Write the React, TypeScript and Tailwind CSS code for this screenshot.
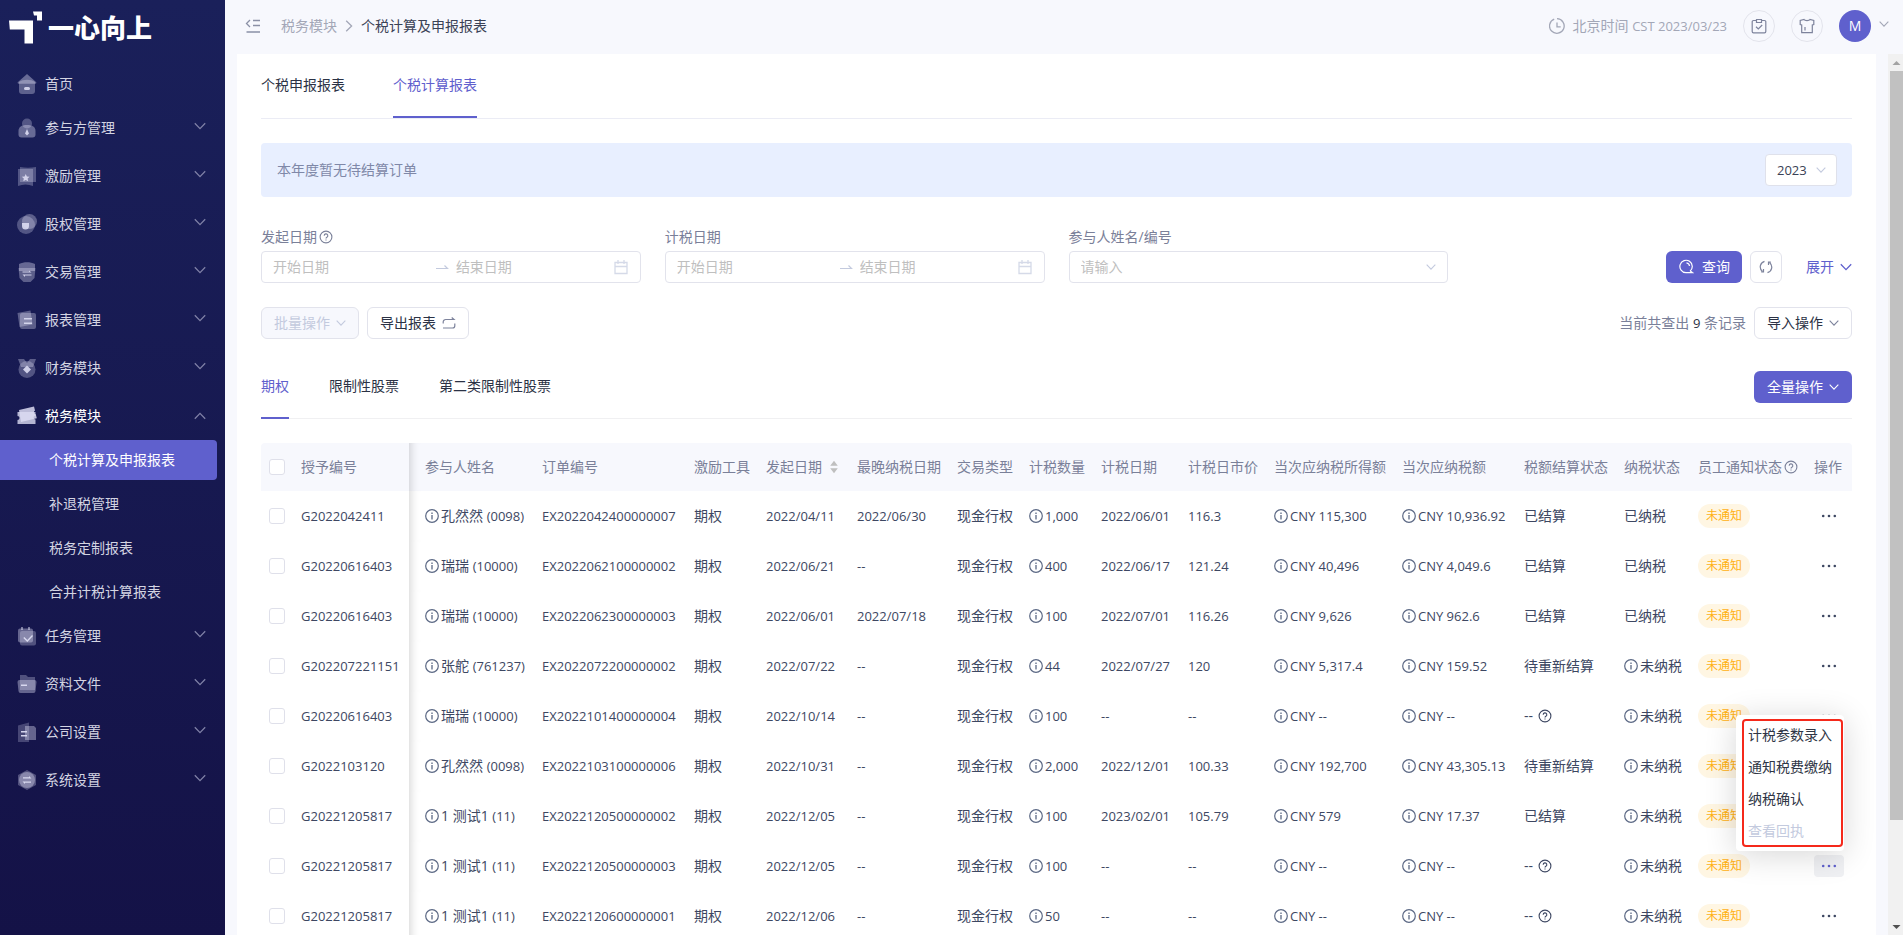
import React, { useState } from "react";

type IconProps = { className?: string };

type Row = {
  grant: string;
  name: string;
  code: string;
  order: string;
  start: string;
  deadline: string;
  qty: string;
  taxDate: string;
  price: string;
  income: string;
  tax: string;
  settle: string;
  paid: boolean;
};

const ROWS: Row[] = [
  { grant: "G2022042411", name: "孔然然", code: "(0098)", order: "EX2022042400000007", start: "2022/04/11", deadline: "2022/06/30", qty: "1,000", taxDate: "2022/06/01", price: "116.3", income: "CNY 115,300", tax: "CNY 10,936.92", settle: "已结算", paid: true },
  { grant: "G20220616403", name: "瑞瑞", code: "(10000)", order: "EX2022062100000002", start: "2022/06/21", deadline: "--", qty: "400", taxDate: "2022/06/17", price: "121.24", income: "CNY 40,496", tax: "CNY 4,049.6", settle: "已结算", paid: true },
  { grant: "G20220616403", name: "瑞瑞", code: "(10000)", order: "EX2022062300000003", start: "2022/06/01", deadline: "2022/07/18", qty: "100", taxDate: "2022/07/01", price: "116.26", income: "CNY 9,626", tax: "CNY 962.6", settle: "已结算", paid: true },
  { grant: "G202207221151", name: "张舵", code: "(761237)", order: "EX2022072200000002", start: "2022/07/22", deadline: "--", qty: "44", taxDate: "2022/07/27", price: "120", income: "CNY 5,317.4", tax: "CNY 159.52", settle: "待重新结算", paid: false },
  { grant: "G20220616403", name: "瑞瑞", code: "(10000)", order: "EX2022101400000004", start: "2022/10/14", deadline: "--", qty: "100", taxDate: "--", price: "--", income: "CNY --", tax: "CNY --", settle: "", paid: false },
  { grant: "G2022103120", name: "孔然然", code: "(0098)", order: "EX2022103100000006", start: "2022/10/31", deadline: "--", qty: "2,000", taxDate: "2022/12/01", price: "100.33", income: "CNY 192,700", tax: "CNY 43,305.13", settle: "待重新结算", paid: false },
  { grant: "G20221205817", name: "1 测试1", code: "(11)", order: "EX2022120500000002", start: "2022/12/05", deadline: "--", qty: "100", taxDate: "2023/02/01", price: "105.79", income: "CNY 579", tax: "CNY 17.37", settle: "已结算", paid: false },
  { grant: "G20221205817", name: "1 测试1", code: "(11)", order: "EX2022120500000003", start: "2022/12/05", deadline: "--", qty: "100", taxDate: "--", price: "--", income: "CNY --", tax: "CNY --", settle: "", paid: false },
  { grant: "G20221205817", name: "1 测试1", code: "(11)", order: "EX2022120600000001", start: "2022/12/06", deadline: "--", qty: "50", taxDate: "--", price: "--", income: "CNY --", tax: "CNY --", settle: "", paid: false },
];

const TAX_PAGES = ["个税计算及申报报表", "补退税管理", "税务定制报表", "合并计税计算报表"];
const STOCK_TABS = ["期权", "限制性股票", "第二类限制性股票"];
const MENU_ITEMS = ["计税参数录入", "通知税费缴纳", "纳税确认", "查看回执"];

// --------------------------------------------------------------------------
// Icons
// --------------------------------------------------------------------------
const Chevron: React.FC<IconProps> = ({ className }) => (
  <svg viewBox="0 0 12 12" fill="none" stroke="currentColor" className={className}>
    <path d="M0.8 3.2 6 8.6l5.2-5.4" strokeWidth="1.3" />
  </svg>
);

const InfoIcon: React.FC = () => (
  <svg viewBox="0 0 14 14" fill="none" stroke="currentColor" className="size-[14px] shrink-0 text-[#5b6884]">
    <circle cx="7" cy="7" r="6.3" strokeWidth="1.2" />
    <path d="M7 6v4.4M7 3.6v1.3" strokeWidth="1.3" />
  </svg>
);

const HelpIcon: React.FC = () => (
  <svg viewBox="0 0 14 14" fill="none" stroke="currentColor" className="size-[14px] shrink-0">
    <circle cx="7" cy="7" r="5.9" strokeWidth="1.1" />
    <path d="M5.2 5.7a1.8 1.8 0 1 1 2.7 1.5c-.6.4-.9.7-.9 1.3M7 9.4v1.2" strokeWidth="1.1" />
  </svg>
);

const CalendarIcon: React.FC = () => (
  <svg viewBox="0 0 16 16" fill="none" stroke="#d5dae8" className="size-4 shrink-0">
    <path d="M2 3.500h12v11H2zM2 7.500h12M5 1v4M11 1v4" strokeWidth="1.3" />
  </svg>
);

const MENU_ICONS: Record<string, React.ReactNode> = {
  首页: (
    <>
      <path d="M10 0 19 8a1 1 0 0 1-.6 1.8H1.6A1 1 0 0 1 1 8Z" opacity=".4" />
      <path d="M2 8c4-3 12-3 16 0v9a3 3 0 0 1-3 3H5a3 3 0 0 1-3-3Z" opacity=".35" />
      <rect x="7" y="13" width="6" height="3" rx="1.5" opacity=".9" />
    </>
  ),
  参与方管理: (
    <>
      <circle cx="10" cy="5.5" r="5" opacity=".3" />
      <path d="M1.5 13c0-4 3-6 8.5-6s8.5 2 8.5 6v3.5a3 3 0 0 1-3 3h-11a3 3 0 0 1-3-3Z" opacity=".4" />
      <path d="m10 11 2 4.5-2 2-2-2Z" opacity=".9" />
    </>
  ),
  激励管理: (
    <>
      <path d="M3 1c5 1 11 1 16 0v15H3Z" opacity=".3" />
      <path d="M1 3h15v17c-5-2-10-2-15 0Z" opacity=".3" />
      <path d="m8.7 8 1.2 2.5 2.7.3-2 1.800.6 2.700-2.500-1.300-2.400 1.300.5-2.700-2-1.800 2.800-.3Z" opacity=".9" />
    </>
  ),
  股权管理: (
    <>
      <circle cx="12.5" cy="7.5" r="7.5" opacity=".35" />
      <circle cx="9" cy="11" r="9" opacity=".3" />
      <path d="M5 9h7v3a3.5 3.5 0 0 1-7 0Z" opacity=".9" />
    </>
  ),
  交易管理: (
    <>
      <path d="M2 2c5-2.500 11-2.500 16 0v7H2Z" opacity=".4" />
      <path d="M1.500 6h17l-1 10-4 4h-7l-4-4Z" opacity=".35" />
      <path d="M5.500 10.500h9L12 8.500v1H5.500zM14.500 12.500h-9L8 15v-1.500h6.500z" opacity=".9" />
    </>
  ),
  报表管理: (
    <>
      <path d="m.5 3 13-2.500 2 14L2.500 17Z" opacity=".35" />
      <rect x="3" y="3" width="16" height="16" rx="2" opacity=".35" />
      <path d="M7 8h8v1.500H7zM7 12.500h8V14H7z" opacity=".9" />
    </>
  ),
  财务模块: (
    <>
      <path d="M1 1h6l3 4 3-4h6l-3 8H4Z" opacity=".35" />
      <circle cx="10" cy="11.5" r="8.5" opacity=".3" />
      <path d="m10 7.500 4 4-4 4-4-4Z" opacity=".9" />
    </>
  ),
  税务模块: (
    <>
      <path d="m2 4 15-3.500 1 4a2 2 0 0 0 .8 3.800l1 4L4 16Z" opacity=".85" />
      <path d="M.500 6h18v3.500a2 2 0 0 0 0 4V18H.500v-4a2 2 0 0 0 0-4Z" opacity=".8" />
    </>
  ),
  任务管理: (
    <>
      <rect x="1" y="2.5" width="15" height="14" rx="2" opacity=".4" />
      <path d="M4 1h2v3H4zM11 1h2v3h-2z" opacity=".5" />
      <rect x="3" y="5" width="16" height="14.5" rx="2" opacity=".3" />
      <path d="m7.300 11 3 3 4.700-5 1 1-5.700 6-4-4Z" opacity=".95" />
    </>
  ),
  资料文件: (
    <>
      <path d="M3 1h6l2 2h7v13H3Z" opacity=".3" />
      <path d="M.5 8a2 2 0 0 1 2-2h15a2 2 0 0 1 2 2l-1 9a2 2 0 0 1-2 2h-13a2 2 0 0 1-2-2Z" opacity=".4" />
      <path d="M4 10.500h6V12H4z" opacity=".95" />
    </>
  ),
  公司设置: (
    <>
      <path d="M8 4h9l2 2v12H8Z" opacity=".4" />
      <path d="M1 3.500 12 .5V20H1Z" opacity=".25" />
      <path d="M4 9h6v1.500H4zM4 13h6v1.500H4z" opacity=".95" />
    </>
  ),
  系统设置: (
    <>
      <path d="m10 0 9 5v10l-9 5-9-5V5Z" opacity=".3" />
      <circle cx="10" cy="10" r="8" opacity=".4" />
      <path d="M6 7.300h6V6l2.500 2.500H6zM14 12.700H8V14l-2.500-2.500H14z" opacity=".95" />
    </>
  ),
};

// --------------------------------------------------------------------------
// Sidebar
// --------------------------------------------------------------------------
const MenuItem: React.FC<{ label: string; open?: boolean; leaf?: boolean }> = ({ label, open, leaf }) => (
  <button
    aria-expanded={leaf ? undefined : !!open}
    className={`flex h-10 w-full items-center pl-[17px] pr-[19px] text-left ${open ? "text-white" : "text-[#d3d4e2]"}`}
  >
    <svg viewBox="0 0 20 20" fill="#dcdcf2" className="mr-2 size-5 shrink-0">
      {MENU_ICONS[label]}
    </svg>
    <span className="flex-1">{label}</span>
    {!leaf && <Chevron className={`size-3 text-[#7f80a6] ${open ? "rotate-180" : "mb-1"}`} />}
  </button>
);

const Sidebar: React.FC = () => (
  <aside className="w-[225px] shrink-0 bg-gradient-to-b from-[#1a205a] to-[#141247]">
    <div className="flex h-14 items-center pl-2 text-white">
      <svg viewBox="0 0 36 36" fill="white" className="size-9">
        <path d="M1 10.500h24V33.500H16.500V19.500H1.800Z M25 1.500h9V10.500h-5V5.500h-3Z" />
      </svg>
      <span className="ml-1 text-[26px] font-black leading-9">一心向上</span>
    </div>
    <nav className="mt-2">
      <div className="mb-1">
        <MenuItem label="首页" leaf />
      </div>
      <div className="mb-2 flex flex-col gap-2">
        <MenuItem label="参与方管理" />
        <MenuItem label="激励管理" />
        <MenuItem label="股权管理" />
        <MenuItem label="交易管理" />
        <MenuItem label="报表管理" />
        <MenuItem label="财务模块" />
      </div>
      <MenuItem label="税务模块" open />
      <div className="my-1 flex flex-col gap-1 pr-2">
        {TAX_PAGES.map((page, i) => (
          <a
            key={page}
            href="#"
            className={`flex h-10 items-center pl-[49px] ${
              i === 0 ? "rounded-r bg-[#5f60cd] text-white" : "text-[#d3d4e2]"
            }`}
          >
            {page}
          </a>
        ))}
      </div>
      <div className="flex flex-col gap-2">
        <MenuItem label="任务管理" />
        <MenuItem label="资料文件" />
        <MenuItem label="公司设置" />
        <MenuItem label="系统设置" />
      </div>
    </nav>
  </aside>
);

// --------------------------------------------------------------------------
// Top bar
// --------------------------------------------------------------------------
const TopBar: React.FC = () => (
  <header className="flex h-[54px] shrink-0 items-center pb-[2px] pl-5 pr-[14px]">
    <button aria-label="收起菜单" className="mr-5">
      <svg viewBox="0 0 16 16" fill="none" stroke="#8b90a6" strokeWidth="1.300" className="size-4">
        <path d="M5 2 1.500 5.500 5 9M8 2.500h7M8 7.500h7M1.500 14h13.500" />
      </svg>
    </button>
    <nav className="flex items-center">
      <a href="#" className="text-[#a3a7b7]">税务模块</a>
      <Chevron className="mx-[6px] size-3 -rotate-90 text-[#a3a7b7]" />
      <span className="text-[#3a4256]">个税计算及申报报表</span>
    </nav>

    <div className="ml-auto flex items-center text-[#a3a7b7]">
      <svg viewBox="0 0 16 16" fill="none" stroke="currentColor" strokeWidth="1.300" className="mr-2 size-4">
        <path d="M5.200 1.200A7.300 7.300 0 1 0 8 .7M3.600 2.200l.3-.2M8 4.500v4.300h3.700" />
      </svg>
      <span>
        北京时间 <span className="text-[13px]">CST 2023/03/23</span>
      </span>
      <button aria-label="待办" className="ml-4 flex size-8 items-center justify-center rounded-full border border-[#e3e4ec]">
        <svg viewBox="0 0 16 16" fill="none" stroke="#7d839c" strokeWidth="1.200" className="size-4">
          <path d="M5.500 2.500H2.500a1.300 1.300 0 0 0-1.300 1.300v9.700a1.300 1.300 0 0 0 1.300 1.300h11a1.300 1.300 0 0 0 1.300-1.300V3.800a1.300 1.300 0 0 0-1.300-1.300h-3M5.500 1.500h5v3h-5zM5 8.800l2.300 2.200L11.200 7" />
        </svg>
      </button>
      <button aria-label="换肤" className="ml-4 flex size-8 items-center justify-center rounded-full border border-[#e3e4ec]">
        <svg viewBox="0 0 16 16" fill="none" stroke="#7d839c" strokeWidth="1.200" className="size-4">
          <path d="M5 1.500c.8 1.400 5.200 1.400 6 0L14.800 2.500v4l-1.500.5v7.700H2.700V7l-1.500-.5v-4ZM6 9v3.500" />
        </svg>
      </button>
      <button aria-label="账户" className="ml-4 flex items-center gap-2">
        <span className="flex size-8 items-center justify-center rounded-full bg-[#5f60cd] text-white">M</span>
        <Chevron className="mb-1 size-[10px] text-[#a3a7b7]" />
      </button>
    </div>
  </header>
);

// --------------------------------------------------------------------------
// Filters
// --------------------------------------------------------------------------
const DateRange: React.FC<{ id: string; label: string; help?: boolean }> = ({ id, label, help }) => (
  <div>
    <div className="flex h-7 items-center gap-[2px] text-[#7a8099]">
      <label htmlFor={id}>{label}</label>
      {help && <HelpIcon />}
    </div>
    <div className="flex h-8 items-center rounded border border-[#e2e3ec] px-[11px]">
      <input id={id} placeholder="开始日期" className="w-0 flex-1 outline-none placeholder:text-[#bfbfbf]" />
      <svg viewBox="0 0 14 14" fill="none" stroke="#c3cade" strokeWidth="1.200" className="mx-[6px] size-[14px] shrink-0">
        <path d="M0 8.500h11.500L8.500 5.500" />
      </svg>
      <input aria-label={`${label}结束日期`} placeholder="结束日期" className="w-0 flex-1 outline-none placeholder:text-[#bfbfbf]" />
      <CalendarIcon />
    </div>
  </div>
);

const Filters: React.FC = () => (
  <form className="mt-[26px] grid grid-cols-4 gap-6">
    <DateRange id="start-date" label="发起日期" help />
    <DateRange id="tax-date" label="计税日期" />
    <div>
      <label htmlFor="participant" className="flex h-7 items-center text-[#7a8099]">
        参与人姓名/编号
      </label>
      <div className="relative">
        <select
          id="participant"
          className="h-8 w-full appearance-none rounded border border-[#e2e3ec] bg-white px-[11px] text-[#bfbfbf] outline-none"
        >
          <option>请输入</option>
        </select>
        <Chevron className="pointer-events-none absolute right-3 top-[11px] size-[10px] text-[#c3cade]" />
      </div>
    </div>
    <div className="flex items-end justify-end">
      <button type="button" className="flex h-8 items-center gap-2 rounded-md bg-[#5f60cd] px-3 text-white">
        <svg viewBox="0 0 16 16" fill="none" stroke="currentColor" strokeWidth="1.200" className="size-4">
          <path d="M12 12.300A6.200 6.200 0 1 0 8 13.700h6.700L12 11.800M8.500 3.800a3.600 3.600 0 0 1 3 3.200" />
        </svg>
        查询
      </button>
      <button type="button" aria-label="重置" className="ml-2 flex size-8 items-center justify-center rounded-md border border-[#e2e3ec] text-[#7d839c]">
        <svg viewBox="0 0 14 14" fill="none" stroke="currentColor" strokeWidth="1.200" className="size-[14px]">
          <path d="M5.500 1.300A5.800 5.800 0 0 0 3.300 11.300M4.500 9v2.800H2.200M8.500 12.700A5.800 5.800 0 0 0 10.700 2.700M9.500 5V2.200h2.300" />
        </svg>
      </button>
      <button type="button" className="ml-6 flex h-8 items-center gap-[6px] text-[#5f60cd]">
        展开
        <Chevron className="size-3" />
      </button>
    </div>
  </form>
);

// --------------------------------------------------------------------------
// Table
// --------------------------------------------------------------------------
const CHECKBOX = "block size-4 appearance-none rounded-[3px] border border-[#dfe0ea] bg-white";

const WithInfo: React.FC<{ children: React.ReactNode }> = ({ children }) => (
  <span className="flex items-center gap-[2px]">
    <InfoIcon />
    <span>{children}</span>
  </span>
);

const RowActions: React.FC<{ open: boolean }> = ({ open }) => (
  <div className="relative w-[30px]">
    <button
      aria-label="更多操作"
      className={`flex h-[22px] w-[30px] items-center justify-center rounded ${
        open ? "bg-[#f0f1f4] text-[#5f60cd]" : "text-[#3d4762]"
      }`}
    >
      <svg viewBox="0 0 16 4" fill="currentColor" className="h-1 w-4">
        <circle cx="2.200" cy="2" r="1.300" />
        <circle cx="8" cy="2" r="1.300" />
        <circle cx="13.800" cy="2" r="1.300" />
      </svg>
    </button>
    {open && (
      <div className="absolute bottom-full right-0 z-10 mb-1 w-[108px] rounded bg-white py-1 pl-[6px] pr-px shadow-[0_4px_32px_rgba(0,0,0,0.16)]">
        <div className="flex flex-col rounded ring-2 ring-inset ring-[#f5291b]">
          {MENU_ITEMS.map((item, i) => (
            <button
              key={item}
              disabled={i === 3}
              className={`h-8 whitespace-nowrap pl-[6px] text-left ${i === 3 ? "text-[#c3cade]" : "text-[#2f3646]"}`}
            >
              {item}
            </button>
          ))}
        </div>
      </div>
    )}
  </div>
);

const ReportTable: React.FC = () => (
  <table className="mt-6 w-full table-fixed border-separate border-spacing-0 whitespace-nowrap text-left text-[#3d4762] [&_td]:px-2 [&_th]:px-2 [&_th]:font-normal">
    <colgroup>
      <col className="w-[32px]" />
      <col className="w-[116px]" />
      <col className="w-[125px]" />
      <col className="w-[152px]" />
      <col className="w-[72px]" />
      <col className="w-[91px]" />
      <col className="w-[100px]" />
      <col className="w-[72px]" />
      <col className="w-[72px]" />
      <col className="w-[87px]" />
      <col className="w-[86px]" />
      <col className="w-[128px]" />
      <col className="w-[122px]" />
      <col className="w-[100px]" />
      <col className="w-[74px]" />
      <col className="w-[116px]" />
      <col className="w-[46px]" />
    </colgroup>
    <thead>
      <tr className="h-12 text-[#7a8099] [&_th]:bg-[#f7f8fd]">
        <th className="rounded-tl">
          <input type="checkbox" aria-label="全选" className={CHECKBOX} />
        </th>
        <th>授予编号</th>
        <th className="pl-4! shadow-[inset_10px_0_8px_-8px_rgba(0,0,0,0.16)]">参与人姓名</th>
        <th>订单编号</th>
        <th>激励工具</th>
        <th>
          <span className="flex items-center gap-2">
            发起日期
            <svg viewBox="0 0 8 14" fill="#bfbfbf" className="h-[14px] w-2">
              <path d="M4 .8 7.800 5.800H.2ZM4 13.200.2 8.200h7.600Z" />
            </svg>
          </span>
        </th>
        <th>最晚纳税日期</th>
        <th>交易类型</th>
        <th>计税数量</th>
        <th>计税日期</th>
        <th>计税日市价</th>
        <th>当次应纳税所得额</th>
        <th>当次应纳税额</th>
        <th>税额结算状态</th>
        <th>纳税状态</th>
        <th>
          <span className="flex items-center gap-[2px]">
            员工通知状态
            <HelpIcon />
          </span>
        </th>
        <th className="rounded-tr">操作</th>
      </tr>
    </thead>
    <tbody>
      {ROWS.map((row, i) => (
        <tr key={row.order} className="h-[50px]">
          <td>
            <input type="checkbox" aria-label={row.order} className={CHECKBOX} />
          </td>
          <td className="text-[13px]">{row.grant}</td>
          <td className="pl-4! shadow-[inset_10px_0_8px_-8px_rgba(0,0,0,0.16)]">
            <WithInfo>
              {row.name} <span className="text-[13px]">{row.code}</span>
            </WithInfo>
          </td>
          <td className="text-[13px]">{row.order}</td>
          <td>期权</td>
          <td className="text-[13px]">{row.start}</td>
          <td className="text-[13px]">{row.deadline}</td>
          <td>现金行权</td>
          <td className="text-[13px]">
            <WithInfo>{row.qty}</WithInfo>
          </td>
          <td className="text-[13px]">{row.taxDate}</td>
          <td className="text-[13px]">{row.price}</td>
          <td className="text-[13px]">
            <WithInfo>{row.income}</WithInfo>
          </td>
          <td className="text-[13px]">
            <WithInfo>{row.tax}</WithInfo>
          </td>
          <td>
            {row.settle || (
              <span className="flex items-center gap-[2px]">
                <span className="w-3">--</span>
                <HelpIcon />
              </span>
            )}
          </td>
          <td>{row.paid ? "已纳税" : <WithInfo>未纳税</WithInfo>}</td>
          <td>
            <span className="inline-flex h-6 items-center rounded-full bg-[#fff6e3] px-2 align-middle text-xs text-[#ffb114]">
              未通知
            </span>
          </td>
          <td>
            <RowActions open={i === 7} />
          </td>
        </tr>
      ))}
    </tbody>
  </table>
);

// --------------------------------------------------------------------------
// Page
// --------------------------------------------------------------------------
const App: React.FC = () => {
  const [stockTab, setStockTab] = useState(STOCK_TABS[0]);

  return (
    <div className="flex h-screen overflow-hidden bg-[#f7f8fd] font-['Open_Sans','Noto_Sans_CJK_SC',sans-serif] text-[14px] leading-[22px]">
      <Sidebar />

      <div className="flex min-w-0 flex-1 flex-col">
        <TopBar />

        <div className="flex min-h-0 flex-1">
          <main className="ml-3 mr-3 min-w-0 flex-1 overflow-hidden bg-white px-6">
            {/* Report tabs */}
            <div className="flex h-[65px] gap-12 border-b border-[#ebecf5] text-[#2b3245]">
              <button className="h-[62px]">个税申报报表</button>
              <button className="flex h-[64px] items-center border-b-2 border-[#5f60cd] text-[#5f60cd]">
                个税计算报表
              </button>
            </div>

            <div className="mt-6 flex h-[54px] items-center justify-between rounded bg-[#e8efff] pl-4 pr-[15px] text-[#7f88a8]">
              <span>本年度暂无待结算订单</span>
              <div className="relative">
                <select
                  aria-label="年度"
                  defaultValue="2023"
                  className="h-8 w-[72px] appearance-none rounded border border-[#dfe1eb] bg-white pl-[11px] text-[13px] text-[#3a4256] outline-none"
                >
                  <option>2023</option>
                </select>
                <Chevron className="pointer-events-none absolute right-[11px] top-[11px] size-[10px] text-[#c3cade]" />
              </div>
            </div>

            <Filters />

            <div className="mt-6 flex items-center">
              <button
                disabled
                className="flex h-8 items-center gap-[6px] rounded-md border border-[#e2e3ec] bg-[#f7f8fd] px-3 text-[#c3cade]"
              >
                批量操作
                <Chevron className="size-[10px]" />
              </button>
              <button className="ml-2 flex h-8 items-center gap-[6px] rounded-md border border-[#e2e3ec] px-3 text-[#2b3245]">
                导出报表
                <svg viewBox="0 0 14 14" fill="none" stroke="#7d839c" strokeWidth="1.200" className="size-[14px]">
                  <path d="M1.200 7.500V6a2.500 2.500 0 0 1 2.500-2.500H12L9.700 1.500M1 12h9.500a2.300 2.300 0 0 0 2.300-2.300V7.500" />
                </svg>
              </button>
              <span className="ml-auto text-[#7a8099]">
                当前共查出 <span className="text-[13px] text-[#2b3245]">9</span> 条记录
              </span>
              <button className="ml-2 flex h-8 items-center gap-[6px] rounded-md border border-[#e2e3ec] px-3 text-[#2b3245]">
                导入操作
                <Chevron className="size-[10px] text-[#7d839c]" />
              </button>
            </div>

            {/* Stock type tabs */}
            <div className="mt-4 flex h-16 items-end border-b border-[#f0f0f2]">
              <div className="-mb-px flex gap-10">
                {STOCK_TABS.map((tab) => (
                  <button
                    key={tab}
                    onClick={() => setStockTab(tab)}
                    className={`flex h-[64px] items-center border-b-2 ${
                      tab === stockTab ? "border-[#5f60cd] text-[#5f60cd]" : "border-transparent text-[#2b3245]"
                    }`}
                  >
                    {tab}
                  </button>
                ))}
              </div>
              <button className="mb-[15px] ml-auto flex h-8 items-center gap-[6px] rounded-md bg-[#5f60cd] px-[13px] text-white">
                全量操作
                <Chevron className="size-[10px]" />
              </button>
            </div>

            <ReportTable />
          </main>

          {/* Scroll bar */}
          <div className="flex w-[15px] shrink-0 flex-col items-center bg-[#f1f1f1]">
            <svg viewBox="0 0 15 17" fill="#a3a3a3" className="h-[17px] w-[15px]">
              <path d="M4.500 11 8.500 7l4 4Z" />
            </svg>
            <div className="ml-[2px] h-[85%] w-[13px] bg-[#c1c1c1]" />
            <svg viewBox="0 0 15 17" fill="#505050" className="mt-auto h-[17px] w-[15px]">
              <path d="M4.500 7l4 4 4-4Z" />
            </svg>
          </div>
        </div>
      </div>
    </div>
  );
};

export default App;
